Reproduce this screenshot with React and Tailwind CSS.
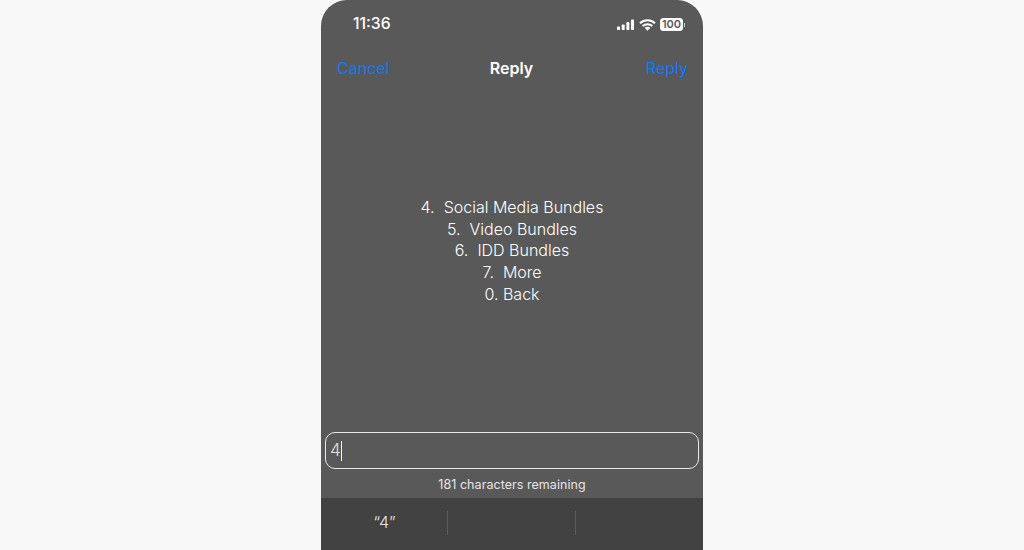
import React from 'react';

function StatusIcons() {
  return (
    <div className="flex items-center gap-[4px]">
      <svg width="18" height="12" viewBox="0 0 18 12" fill="#fff">
        <rect x="0" y="7.5" width="3" height="3.5" rx="0.8" />
        <rect x="4.7" y="5.5" width="3" height="5.5" rx="0.8" />
        <rect x="9.4" y="3" width="3" height="8" rx="0.8" />
        <rect x="14" y="0.5" width="3" height="10.5" rx="0.8" />
      </svg>
      <svg width="17" height="12" viewBox="0 0 17 12" fill="none" stroke="#fff" strokeWidth="2">
        <path d="M1 4.2C5.2 0.3 11.8 0.3 16 4.2" />
        <path d="M3.6 7C6.3 4.6 10.7 4.6 13.4 7" />
        <path d="M6.3 9.6C7.5 8.6 9.5 8.6 10.7 9.6" />
        <path d="M8.5 11.8L7 10.2C7.9 9.5 9.1 9.5 10 10.2Z" fill="#fff" stroke="none" />
      </svg>
      <div className="flex items-center gap-[1px]">
        <div className="w-[23px] h-[13px] rounded-[3.5px] bg-white flex items-center justify-center text-[11px] leading-none font-semibold text-[#595959]">
          100
        </div>
        <div className="w-[1px] h-[4px] bg-white/70"></div>
      </div>
    </div>
  );
}

function App() {
  const lines = ['4.  Social Media Bundles', '5.  Video Bundles', '6.  IDD Bundles', '7.  More', '0. Back'];

  return (
    <div className="w-[1024px] h-[550px] bg-[#f8f8f8] flex justify-center overflow-hidden font-['Inter',sans-serif]">
      <div className="w-[382px] h-[550px] bg-[#595959] rounded-t-[26px] flex flex-col">
        <div className="h-[48px] shrink-0 flex items-end justify-between pl-[32px] pr-[18px] pb-[15px]">
          <span className="text-[15.75px] leading-[18px] font-medium text-white">11:36</span>
          <div className="pb-[2px]">
            <StatusIcons />
          </div>
        </div>

        <div className="h-[40px] shrink-0 flex items-center justify-between pl-[16px] pr-[15px]">
          <span className="w-[70px] text-[16px] text-[#0a7aff]">Cancel</span>
          <span className="text-[16px] font-semibold text-white">Reply</span>
          <span className="w-[72px] text-right text-[16px] text-[#0a7aff]">Reply</span>
        </div>

        <div className="flex-1 pt-[109px] text-center text-white text-[16px] font-light leading-[21.7px] whitespace-pre">
          {lines.map((line) => (
            <div key={line}>{line}</div>
          ))}
        </div>

        <div className="mx-[4px] h-[37px] shrink-0 rounded-[10px] border border-[#e8e8e8] flex items-center pl-[4px] text-[17px] font-light text-[#e0e0e0]">
          <span>4</span>
          <span className="w-[1px] h-[20px] bg-white"></span>
        </div>

        <div className="h-[29px] shrink-0 pt-[4px] flex items-center justify-center text-[12.5px] tracking-[0.05px] text-[#e6e6e6]">
          181 characters remaining
        </div>

        <div className="h-[52px] shrink-0 bg-[#424242] flex items-start">
          <div className="w-[126px] h-[47px] flex items-center justify-center text-[16px] font-light text-[#e6e6e6] pl-[1px]">“4”</div>
          <div className="w-[1px] h-[24px] mt-[13px] bg-[#5c5c5c]"></div>
          <div className="w-[127px]"></div>
          <div className="w-[1px] h-[24px] mt-[13px] bg-[#5c5c5c]"></div>
        </div>
      </div>
    </div>
  );
}

export default App;
